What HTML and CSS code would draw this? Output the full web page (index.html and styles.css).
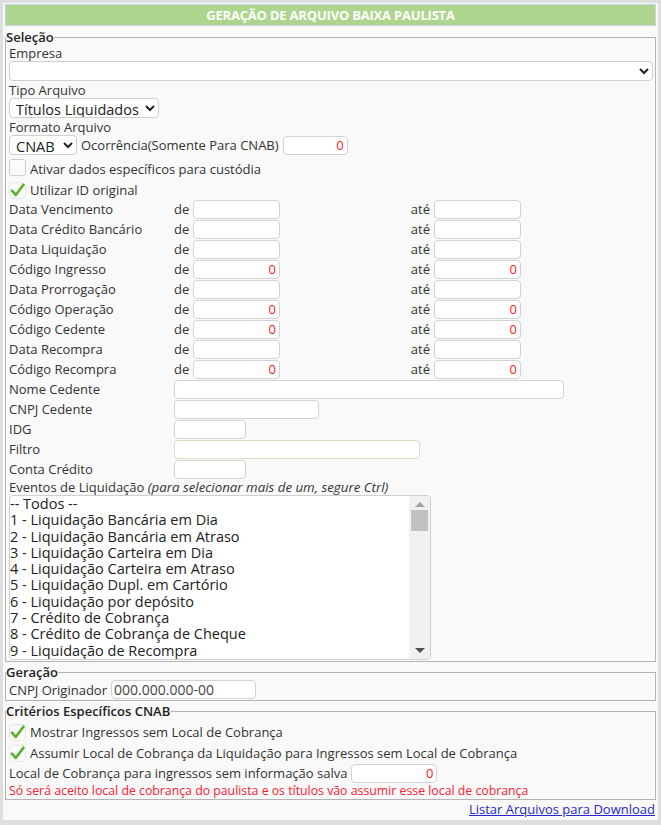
FILE: index.html
```html
<!DOCTYPE html>
<html lang="pt-BR">
<head>
    <meta charset="UTF-8">
    <meta name="viewport" content="width=device-width, initial-scale=1.0">
    <title>Geração de Arquivo Baixa Paulista</title>
    <link rel="stylesheet" href="styles.css">
</head>
<body>
    <div class="page">
        <div class="titlebar">GERAÇÃO DE ARQUIVO BAIXA PAULISTA</div>

        <!-- Seleção -->
        <fieldset class="group">
            <legend>Seleção</legend>

            <div class="label">Empresa</div>
            <select class="select select-full"><option></option></select>

            <div class="label">Tipo Arquivo</div>
            <select class="select select-tipo"><option>Títulos Liquidados</option></select>

            <div class="label">Formato Arquivo</div>
            <div class="inline-row">
                <select class="select select-formato"><option>CNAB</option></select>
                <span>Ocorrência(Somente Para CNAB)</span>
                <input type="text" class="input input-num input-ocorrencia" value="0">
            </div>

            <div class="check-row first-check">
                <span class="box"></span>
                <span>Ativar dados específicos para custódia</span>
            </div>
            <div class="check-row">
                <svg class="tick" viewBox="0 0 16 16"><rect x="0.5" y="0.5" width="15" height="15" rx="4" class="tick-bg" /><path d="M2.8 8.2 L6.3 12.2 L13.6 2.6" /></svg>
                <span>Utilizar ID original</span>
            </div>

            <div class="range-grid">
                <span>Data Vencimento</span><span>de</span><input class="input" type="text"><span class="ate">até</span><input class="input" type="text">
                <span>Data Crédito Bancário</span><span>de</span><input class="input" type="text"><span class="ate">até</span><input class="input" type="text">
                <span>Data Liquidação</span><span>de</span><input class="input" type="text"><span class="ate">até</span><input class="input" type="text">
                <span>Código Ingresso</span><span>de</span><input class="input input-num" type="text" value="0"><span class="ate">até</span><input class="input input-num" type="text" value="0">
                <span>Data Prorrogação</span><span>de</span><input class="input" type="text"><span class="ate">até</span><input class="input" type="text">
                <span>Código Operação</span><span>de</span><input class="input input-num" type="text" value="0"><span class="ate">até</span><input class="input input-num" type="text" value="0">
                <span>Código Cedente</span><span>de</span><input class="input input-num" type="text" value="0"><span class="ate">até</span><input class="input input-num" type="text" value="0">
                <span>Data Recompra</span><span>de</span><input class="input" type="text"><span class="ate">até</span><input class="input" type="text">
                <span>Código Recompra</span><span>de</span><input class="input input-num" type="text" value="0"><span class="ate">até</span><input class="input input-num" type="text" value="0">

                <span>Nome Cedente</span><div class="wide"><input class="input w-nome" type="text"></div>
                <span>CNPJ Cedente</span><div class="wide"><input class="input w-cnpj" type="text"></div>
                <span>IDG</span><div class="wide"><input class="input w-short" type="text"></div>
                <span>Filtro</span><div class="wide"><input class="input w-filtro" type="text"></div>
                <span>Conta Crédito</span><div class="wide"><input class="input w-short" type="text"></div>
            </div>

            <div class="label">Eventos de Liquidação <em>(para selecionar mais de um, segure Ctrl)</em></div>
            <div class="listbox">
                <ul class="options">
                    <li>-- Todos --</li>
                    <li>1 - Liquidação Bancária em Dia</li>
                    <li>2 - Liquidação Bancária em Atraso</li>
                    <li>3 - Liquidação Carteira em Dia</li>
                    <li>4 - Liquidação Carteira em Atraso</li>
                    <li>5 - Liquidação Dupl. em Cartório</li>
                    <li>6 - Liquidação por depósito</li>
                    <li>7 - Crédito de Cobrança</li>
                    <li>8 - Crédito de Cobrança de Cheque</li>
                    <li>9 - Liquidação de Recompra</li>
                </ul>
                <div class="scrollbar">
                    <span class="arrow up"></span>
                    <span class="thumb"></span>
                    <span class="arrow down"></span>
                </div>
            </div>
        </fieldset>

        <!-- Geração -->
        <fieldset class="group">
            <legend>Geração</legend>
            <div class="inline-row geracao-row">
                <span>CNPJ Originador</span>
                <input type="text" class="input input-cnpj" value="000.000.000-00">
            </div>
        </fieldset>

        <!-- Critérios Específicos CNAB -->
        <fieldset class="group">
            <legend>Critérios Específicos CNAB</legend>
            <div class="check-row cnab-first">
                <svg class="tick" viewBox="0 0 16 16"><rect x="0.5" y="0.5" width="15" height="15" rx="4" class="tick-bg" /><path d="M2.8 8.2 L6.3 12.2 L13.6 2.6" /></svg>
                <span>Mostrar Ingressos sem Local de Cobrança</span>
            </div>
            <div class="check-row">
                <svg class="tick" viewBox="0 0 16 16"><rect x="0.5" y="0.5" width="15" height="15" rx="4" class="tick-bg" /><path d="M2.8 8.2 L6.3 12.2 L13.6 2.6" /></svg>
                <span>Assumir Local de Cobrança da Liquidação para Ingressos sem Local de Cobrança</span>
            </div>
            <div class="inline-row">
                <span>Local de Cobrança para ingressos sem informação salva</span>
                <input type="text" class="input input-num" value="0">
            </div>
            <div class="warning">Só será aceito local de cobrança do paulista e os títulos vão assumir esse local de cobrança</div>
        </fieldset>

        <div class="footer">
            <a href="#" class="link">Listar Arquivos para Download</a>
        </div>
    </div>
</body>
</html>
```

FILE: styles.css
```css
/* General */
body {
    margin: 0;
    background: #dedede;
    font-family: "Open Sans", Arial, sans-serif;
    font-size: 13px;
    color: #333;
}

.page {
    box-sizing: border-box;
    margin: 3px 3px 0 3px;
    padding: 1px 2px 0 2px;
    background: #f9f9f9;
    height: 817px;
}

/* Title */
.titlebar {
    height: 20px;
    line-height: 20px;
    background: #aed58d;
    border: 1px solid #c9d3e6;
    color: #fff;
    font-weight: 700;
    font-size: 13px;
    text-align: center;
    letter-spacing: -0.2px;
}

/* Fieldsets */
.group {
    margin: 3px 0 0 0;
    padding: 0 2px 1px 3px;
    border: 1px solid #b4b4b4;
}

.group + .group {
    margin-top: 2px;
}

.group legend {
    padding: 0;
    margin-left: -3px;
    font-weight: 600;
    color: #222;
    line-height: 16px;
}

.label {
    line-height: 16px;
}

.label em {
    font-style: italic;
    font-size: 13.3px;
}

/* Controls */
.select {
    height: 20px;
    border: 1px solid #cfcfcf;
    border-radius: 4px;
    background: #fff;
    font-family: inherit;
    font-size: 14.5px;
    color: #222;
    padding: 0 2px;
    display: block;
    margin-bottom: 1px;
}

.select-full {
    width: 100%;
}

.select-tipo {
    width: 150px;
}

.select-formato {
    width: 68px;
    display: inline-block;
    margin-bottom: 0;
}

.input {
    box-sizing: border-box;
    flex-shrink: 0;
    height: 19px;
    border: 1px solid #d2d2d2;
    border-radius: 4px;
    background: #fff;
    font-family: inherit;
    font-size: 13px;
    padding: 0 3px;
    color: #333;
}

.input-num {
    width: 86px;
    text-align: right;
    color: #ff2020;
}

.input-ocorrencia {
    width: 65px;
}

.inline-row {
    display: flex;
    align-items: center;
    gap: 4px;
    height: 20px;
}

.geracao-row {
    height: 19px;
}

.check-row {
    display: flex;
    align-items: center;
    gap: 4px;
    height: 20px;
    margin-top: 1px;
}

.first-check {
    margin-top: 4px;
}

.cnab-first {
    margin-top: 3px;
}

.box {
    width: 15px;
    height: 15px;
    border: 1px solid #cfcfcf;
    border-radius: 3px;
    background: #fbfbfb;
    margin-top: -3px;
}

.tick {
    width: 17px;
    height: 17px;
    fill: none;
    stroke: #5fb134;
    stroke-width: 2.6;
    stroke-linecap: round;
    stroke-linejoin: round;
}

.tick .tick-bg {
    stroke: #e6e6e6;
    stroke-width: 1;
    fill: #fafafa;
}

/* Range rows */
.range-grid {
    display: grid;
    grid-template-columns: 165px 19px 87px 154px 87px;
    grid-auto-rows: 20px;
    align-items: center;
    margin-top: -1px;
}

.range-grid .ate {
    text-align: right;
    padding-right: 4px;
}

.range-grid .input {
    width: 87px;
}

.wide {
    grid-column: 2 / -1;
    display: flex;
}

.range-grid .w-nome { width: 390px; }
.range-grid .w-cnpj { width: 145px; }
.range-grid .w-short { width: 72px; }
.range-grid .w-filtro { width: 246px; border-color: #e2dcc0; }

/* Listbox */
.listbox {
    display: flex;
    box-sizing: border-box;
    width: 422px;
    height: 165px;
    border: 1px solid #cfcfcf;
    border-radius: 4px;
    background: #fff;
    overflow: hidden;
}

.options {
    list-style: none;
    margin: 0;
    padding: 0;
    flex: 1;
    font-size: 14.5px;
    line-height: 16.3px;
    color: #222;
}

.scrollbar {
    width: 21px;
    background: #f1f1f1;
    display: flex;
    flex-direction: column;
    align-items: center;
}

.thumb {
    width: 17px;
    height: 21px;
    background: #c1c1c1;
    margin-top: 3px;
}

.arrow {
    width: 0;
    height: 0;
    border-left: 5px solid transparent;
    border-right: 5px solid transparent;
}

.arrow.up {
    border-bottom: 5px solid #a3a3a3;
    margin-top: 6px;
}

.arrow.down {
    border-top: 5px solid #505050;
    margin-top: auto;
    margin-bottom: 6px;
}

.input-cnpj {
    width: 145px;
    color: #444;
    font-size: 14px;
    padding-left: 2px;
}

.warning {
    color: #ff2030;
    font-size: 12.3px;
    line-height: 15px;
}

.footer {
    text-align: right;
    padding-right: 1px;
    line-height: 18px;
}

.link {
    color: #2727c9;
    text-decoration: underline;
    font-size: 13px;
}
```
